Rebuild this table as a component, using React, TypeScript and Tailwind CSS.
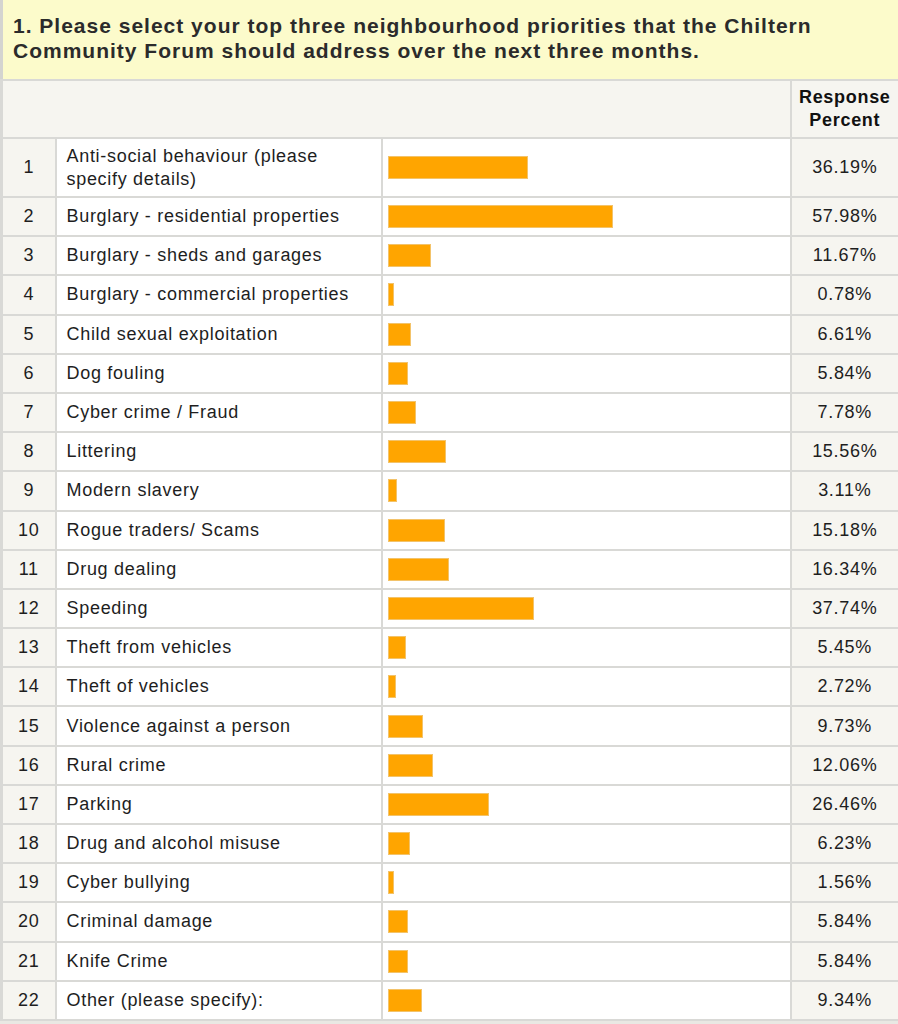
const rows: [string, number][] = [
  ["Anti-social behaviour (please specify details)", 36.19],
  ["Burglary - residential properties", 57.98],
  ["Burglary - sheds and garages", 11.67],
  ["Burglary - commercial properties", 0.78],
  ["Child sexual exploitation", 6.61],
  ["Dog fouling", 5.84],
  ["Cyber crime / Fraud", 7.78],
  ["Littering", 15.56],
  ["Modern slavery", 3.11],
  ["Rogue traders/ Scams", 15.18],
  ["Drug dealing", 16.34],
  ["Speeding", 37.74],
  ["Theft from vehicles", 5.45],
  ["Theft of vehicles", 2.72],
  ["Violence against a person", 9.73],
  ["Rural crime", 12.06],
  ["Parking", 26.46],
  ["Drug and alcohol misuse", 6.23],
  ["Cyber bullying", 1.56],
  ["Criminal damage", 5.84],
  ["Knife Crime", 5.84],
  ["Other (please specify):", 9.34],
];

const barWidth = (p: number) => Math.max(6, Math.round(p * 3.94 - 3));

const App = () => {
  return (
    <div
      className="w-[898px] min-h-[1024px] bg-[#e9e8e3] text-[#1e1e1e]"
      style={{ fontFamily: '"Liberation Sans", Arial, sans-serif' }}
    >
      <div className="h-[79px] bg-[#fcfbcb] border-l-[3px] border-[#d4d4d0] pl-[10px] pt-[13px] text-[21px] leading-[25px] tracking-[1px] font-bold text-[#2b2b2b]">
        1. Please select your top three neighbourhood priorities that the Chiltern
        <br />
        Community Forum should address over the next three months.
      </div>
      <table className="w-[898px] border-collapse table-fixed text-[18px] tracking-[0.7px]">
        <colgroup>
          <col className="w-[54px]" />
          <col className="w-[326px]" />
          <col className="w-[409px]" />
          <col className="w-[109px]" />
        </colgroup>
        <thead>
          <tr className="h-[58px] bg-[#f6f5f0]">
            <th colSpan={3} className="border-2 border-[#d9d9d6] border-l-[3px]"></th>
            <th className="border-2 border-[#d9d9d6] border-r-[3px] font-bold text-[18px] leading-[23px] text-[#111] align-middle">
              Response
              <br />
              Percent
            </th>
          </tr>
        </thead>
        <tbody>
          {rows.map(([label, pct], i) => (
            <tr key={label} className={i === 0 ? "h-[59px]" : "h-[39.2px]"}>
              <td className="border-2 border-l-[3px] border-[#d9d9d6] bg-[#f6f5f0] text-center">{i + 1}</td>
              <td className="border-2 border-[#d9d9d6] bg-white pl-[10px] pr-[6px] leading-[23px]">{label}</td>
              <td className="border-2 border-[#d9d9d6] bg-white pl-[5px]">
                <div
                  className="h-[23px] bg-[#ffa500] border border-[#f3c36a]"
                  style={{ width: barWidth(pct) }}
                />
              </td>
              <td className="border-2 border-r-[3px] border-[#d9d9d6] bg-[#f6f5f0] text-center">
                {pct.toFixed(2)}%
              </td>
            </tr>
          ))}
        </tbody>
      </table>
    </div>
  );
};

export default App;
